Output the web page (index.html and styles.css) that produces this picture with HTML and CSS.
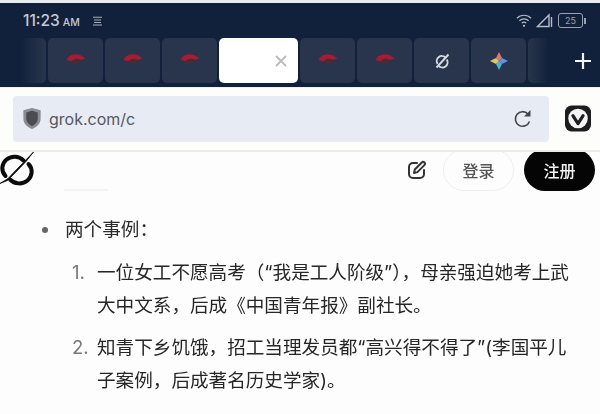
FILE: index.html
```html
<!DOCTYPE html>
<html lang="zh">
<head>
<meta charset="utf-8">
<title>grok.com/c</title>
<link rel="stylesheet" href="styles.css">
</head>
<body>
<div class="screen">
  <div class="chrome">
    <div class="status">
      <div class="status-left">
        <span class="time">11:23<small>AM</small></span>
        <svg class="menu-glyph" viewBox="0 0 11 10"><path d="M1 1.200h9M2 4h7M2 6.500h7M1 9h9"/></svg>
      </div>
      <div class="status-right">
        <svg class="wifi" viewBox="0 0 18 16"><path d="M1 5.500c4.500-4.500 11.500-4.500 16 0M3.800 8.300c2.900-2.800 7.500-2.800 10.400 0M6.500 11c1.400-1.300 3.600-1.300 5 0"/><circle cx="9" cy="14" r="1.300"/></svg>
        <svg class="signal" viewBox="0 0 17 15"><path d="M1.500 13.500 13 2v11.500zM15.500 4v10"/></svg>
        <span class="battery"><span class="battery-level">25</span></span>
      </div>
    </div>
    <div class="tabstrip">
      <div class="tab tab-fade-left"></div>
      <div class="tab"><svg class="fan" viewBox="0 0 22 12"><use href="#fan-icon"/></svg></div>
      <div class="tab"><svg class="fan" viewBox="0 0 22 12"><use href="#fan-icon"/></svg></div>
      <div class="tab"><svg class="fan" viewBox="0 0 22 12"><use href="#fan-icon"/></svg></div>
      <div class="tab tab-active"><svg class="close" viewBox="0 0 12 12"><path d="M1 1l10 10M11 1 1 11"/></svg></div>
      <div class="tab"><svg class="fan" viewBox="0 0 22 12"><use href="#fan-icon"/></svg></div>
      <div class="tab"><svg class="fan" viewBox="0 0 22 12"><use href="#fan-icon"/></svg></div>
      <div class="tab"><svg class="grok-small" viewBox="0 0 16 16"><path d="M11.800 4.800A5.200 5.200 0 0 0 3.500 11M4.500 12.700A5.200 5.200 0 0 0 12.800 6.500"/><path d="M2.500 14.500 14.500 1.500"/></svg></div>
      <div class="tab"><svg class="star" viewBox="0 0 18 18"><path class="s1" d="M9 0 12 6 9 9 6 6z"/><path class="s2" d="M18 9 12 12 9 9 12 6z"/><path class="s3" d="M9 18 6 12 9 9 12 12z"/><path class="s4" d="M0 9 6 6 9 9 6 12z"/></svg></div>
      <div class="tab tab-fade-right"></div>
      <svg class="plus" viewBox="0 0 16 16"><path d="M8 0v16M0 8h16"/></svg>
    </div>
  </div>

  <div class="toolbar">
    <div class="address">
      <svg class="shield" viewBox="0 0 20 24"><path class="shield-outer" d="M10 1 19 3.500V12c0 5.500-4 9-9 11C5 21 1 17.500 1 12V3.500z"/><path class="shield-inner" d="M10 4 16 5.800V12c0 3.800-2.700 6.300-6 7.800C6.700 18.300 4 15.800 4 12V5.800z"/></svg>
      <span class="url">grok.com/c</span>
      <svg class="reload" viewBox="0 0 20 20"><path class="reload-arc" d="M16.500 12.500A7.300 7.300 0 1 1 15 5"/><path class="reload-head" d="M17.500 1v6.500H11z"/></svg>
    </div>
    <svg class="vivaldi" viewBox="0 0 28 28"><rect width="28" height="28" rx="7"/><circle class="v-disc" cx="14" cy="14" r="10.500"/><path class="v-mark" d="M8.500 11 14 19.500 19.500 11"/></svg>
  </div>

  <main class="page">
    <header class="site-header">
      <svg class="grok-logo" viewBox="0 0 34 33"><path class="logo-ring" d="M23.500 8.500A11.500 10.800 0 0 0 5.500 24"/><path class="logo-ring" d="M10 27.500A11.500 10.800 0 0 0 28.500 12"/><path class="logo-slash" d="M0 31.500 8 26.500 19 15 33.500 0 26 9.500 15.500 20.500 7.500 28.500z"/></svg>
      <div class="actions">
        <svg class="edit" viewBox="0 0 20 20"><path d="M10 3H6a4 4 0 0 0-4 4v7a4 4 0 0 0 4 4h7a4 4 0 0 0 4-4v-4"/><path d="M7 13l.8-3.500 7-7a1.800 1.800 0 0 1 2.600 2.600l-7 7z"/></svg>
        <button class="pill pill-light">登录</button>
        <button class="pill pill-dark">注册</button>
      </div>
    </header>
    <div class="ghost"></div>
    <article class="content">
      <ul class="bullets">
        <li>两个事例：
          <ol class="cases">
            <li>一位女工不愿高考（“我是工人阶级”），母亲强迫她考上武大中文系，后成《中国青年报》副社长。</li>
            <li>知青下乡饥饿，招工当理发员都“高兴得不得了”(李国平儿子案例，后成著名历史学家)。</li>
          </ol>
        </li>
      </ul>
    </article>
  </main>
</div>
<svg class="defs" aria-hidden="true"><symbol id="fan-icon" viewBox="0 0 22 12"><path fill="#a81b32" d="M1.500 7C4.500 0 14-1 20.500 5.500L15.500 7C13 5 9 5 7 8.500z"/><path fill="#4a2b34" d="M6.500 8.500c2-3.500 6.500-3.500 9 0l-1.800 3c-1-1.300-4.300-1.300-5.300 0z"/></symbol></svg>
</body>
</html>
```
FILE: styles.css
```css
* { box-sizing: border-box; }
html, body { margin: 0; height: 100%; }
body { background: #fdfdfd; overflow: hidden; font-family: Inter, "Noto Sans CJK SC", sans-serif; }
.defs { width: 0; height: 0; display: block; }

.screen { width: 600px; height: 414px; display: flex; flex-direction: column; filter: blur(0.6px); overflow: hidden; }

.chrome { height: 88px; flex: none; background: #12213b; border-top: 3px solid #e8ecef; border-bottom: 1px solid #eef0f2; }
.status { height: 35px; padding: 0 14px 0 23px; display: flex; justify-content: space-between; align-items: center; }
.status-left { display: flex; align-items: center; gap: 12px; }
.time { color: #c3c9d3; font-size: 15.500px; font-weight: 500; line-height: 1; }
.time small { font-size: 10.500px; margin-left: 3px; }
.menu-glyph { width: 11px; height: 10px; fill: none; stroke: #a8afbc; stroke-width: 1.100; }
.status-right { display: flex; align-items: center; gap: 4px; }
.wifi { width: 16px; height: 15px; fill: none; stroke: #b5bbc6; stroke-width: 1.300; }
.wifi circle { fill: #b5bbc6; stroke: none; }
.signal { width: 17px; height: 15px; fill: none; stroke: #b5bbc6; stroke-width: 1.400; }
.battery { width: 25px; height: 15px; border: 1.200px solid #9aa1af; border-radius: 3px; display: flex; align-items: center; justify-content: center; position: relative; margin-left: 1px; margin-right: 3px; }
.battery::after { content: ""; position: absolute; right: -4px; top: 4px; width: 2px; height: 6px; background: #9aa1af; }
.battery-level { color: #9aa1af; font-size: 9px; line-height: 1; }

.tabstrip { display: flex; align-items: center; height: 45px; gap: 2px; padding-left: 20px; }
.tab { width: 55px; height: 45px; flex: none; background: #28354c; border-radius: 5px; display: flex; align-items: center; justify-content: center; }
.tab-fade-left { width: 26px; background: linear-gradient(to right, #12213b, #28354c); }
.tab-fade-right { width: 21px; background: linear-gradient(to right, #28354c, #12213b); }
.tab-active { width: 79px; background: #fff; justify-content: flex-end; padding-right: 11px; }
.fan { width: 22px; height: 12px; margin-top: -4px; }
.close { width: 12px; height: 12px; fill: none; stroke: #b8babd; stroke-width: 1.800; }
.grok-small { width: 16px; height: 16px; fill: none; stroke: #d8dbe0; stroke-width: 1.900; }
.star { width: 18px; height: 18px; }
.s1 { fill: #e2756b; }
.s2 { fill: #5c93ea; }
.s3 { fill: #4db5c9; }
.s4 { fill: #e8c35a; }
.plus { width: 16px; height: 16px; fill: none; stroke: #f4f5f7; stroke-width: 2.200; margin-left: 24px; }

.toolbar { height: 64px; flex: none; background: #fdfdfb; display: flex; align-items: center; padding: 0 9px 1px 13px; gap: 16px; border-bottom: 2px solid #ececec; }
.address { width: 536px; height: 46px; flex: none; background: #e7ebf4; border-radius: 4px; display: flex; align-items: center; padding: 0 16px 0 9px; }
.shield { width: 20px; height: 23px; flex: none; margin-right: 7px; }
.shield-outer { fill: #8a8d93; }
.shield-inner { fill: #4a4c52; }
.url { color: #55585f; font-size: 16px; flex: 1; }
.reload { width: 20px; height: 20px; flex: none; }
.reload-arc { fill: none; stroke: #44464b; stroke-width: 1.600; }
.reload-head { fill: #44464b; }
.vivaldi { width: 26px; height: 27px; flex: none; fill: #1d1d1f; }
.v-disc { fill: #f4f4f4; }
.v-mark { fill: none; stroke: #1d1d1f; stroke-width: 3.400; stroke-linejoin: round; stroke-linecap: round; }

.page { flex: 1; display: flex; flex-direction: column; min-height: 0; color: #333; }
.site-header { height: 39px; flex: none; display: flex; justify-content: space-between; align-items: flex-end; overflow: hidden; padding-right: 5px; }
.grok-logo { width: 34px; height: 33px; align-self: flex-start; overflow: visible; }
.logo-ring { fill: none; stroke: #0c0c0c; stroke-width: 4; stroke-linecap: round; }
.logo-slash { fill: #0c0c0c; stroke: #0c0c0c; stroke-width: 0.800; stroke-linejoin: round; }
.actions { display: flex; align-items: flex-end; }
.edit { width: 20px; height: 20px; fill: none; stroke: #333; stroke-width: 2; stroke-linecap: round; stroke-linejoin: round; margin: 0 16px 11px 0; }
.pill { width: 71px; height: 42px; border-radius: 21px; font: 500 16px "Noto Sans CJK SC", sans-serif; padding: 0; flex: none; }
.pill-light { background: #fdfdfd; border: 1px solid #eeeeee; color: #555; margin-right: 10px; }
.pill-dark { background: #050505; border: 0; color: #f2f2f2; }

.ghost { width: 44px; height: 2px; background: #f3f3f3; margin-left: 64px; margin-top: -2px; }

.content { font-size: 18.600px; line-height: 33px; padding-top: 22px; }
.bullets { margin: 0; padding: 0 0 0 65px; list-style: none; position: relative; }
.bullets > li::before { content: ""; position: absolute; left: 42px; top: 14px; width: 6px; height: 6px; border-radius: 50%; background: #666; }
.bullets > li { color: #2a2a2a; }
.cases { margin: 10px 0 0; padding: 0 25px 0 32px; list-style: none; }
.cases li { counter-increment: n; position: relative; margin-bottom: 9px; color: #262626; }
.cases li::before { content: counter(n) "."; position: absolute; left: -25px; color: #777; }
```
